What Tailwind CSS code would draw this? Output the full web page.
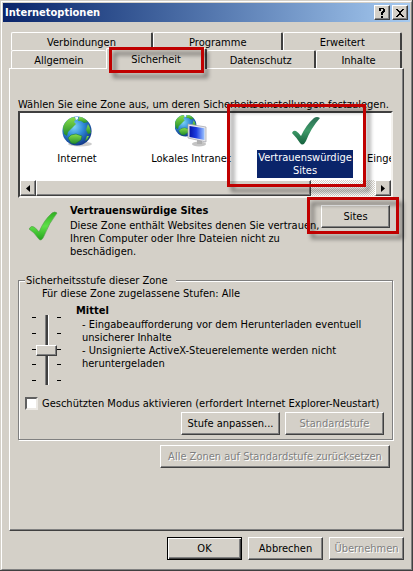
<!DOCTYPE html>
<html lang="de">
<head>
	<meta charset="UTF-8">
	<meta name="viewport" content="width=device-width, initial-scale=1.0">
	<script src="https://cdn.jsdelivr.net/npm/@tailwindcss/browser@4"></script>
	<title>Internetoptionen</title>
</head>
<body class="bg-[#d4d0c8] text-black text-[11px] leading-[13px] font-['DejaVu_Sans_Condensed','DejaVu_Sans',sans-serif]">
	<div class="min-h-screen flex flex-col pl-px pt-px bg-[#d4d0c8] border-r border-b border-[#404040]">
	<main class="grow flex flex-col p-px border border-t-white border-l-white border-r-[#808080] border-b-[#808080] overflow-hidden">

		<!-- Title bar -->
		<header class="h-[19px] flex items-center gap-0.5 px-0.5 bg-linear-to-r from-[#0a246a] to-[#a6caf0]">
			<h1 class="grow font-bold text-white">Internetoptionen</h1>
			<button aria-label="Hilfe" class="w-4 h-[15px] flex items-center justify-center bg-[#d4d0c8] border border-t-white border-l-white border-r-[#404040] border-b-[#404040] shadow-[inset_-1px_-1px_#808080]">
				<svg class="w-2 h-[10px]" viewBox="0 0 8 10" shape-rendering="crispEdges"><path d="M1 0h5v1h1v3h-1v1h-1v2h-2v-3h1v-1h1v-2h-2v2h-2zM3 8h2v2h-2z"/></svg>
			</button>
			<button aria-label="Schließen" class="w-4 h-[15px] flex items-center justify-center bg-[#d4d0c8] border border-t-white border-l-white border-r-[#404040] border-b-[#404040] shadow-[inset_-1px_-1px_#808080]">
				<svg class="w-2 h-2" viewBox="0 0 8 8" shape-rendering="crispEdges"><path d="M0 0h2v1h1v1h2v-1h1v-1h2v1h-1v1h-1v1h-1v2h1v1h1v1h1v1h-2v-1h-1v-1h-2v1h-1v1h-2v-1h1v-1h1v-1h1v-2h-1v-1h-1v-1h-1z"/></svg>
			</button>
		</header>

		<div class="grow flex flex-col px-1.5 pt-[10px] pb-2">
			<!-- Tabs -->
			<nav class="px-0.5">
				<div class="flex h-[18px]">
					<button class="flex-[142] pt-0.5 rounded-t-xs border-t border-l border-white border-r-2 border-r-[#404040]">Verbindungen</button>
					<button class="flex-[130] pt-0.5 rounded-t-xs border-t border-l border-white border-r-2 border-r-[#404040]">Programme</button>
					<button class="flex-[118] pt-0.5 rounded-t-xs border-t border-l border-white border-r-2 border-r-[#404040]">Erweitert</button>
				</div>
				<div class="flex h-[18px]">
					<button class="flex-[95] pt-0.5 rounded-t-xs border-t border-l border-white">Allgemein</button>
					<div class="flex-[103] relative z-10 -mt-0.5 -mb-px flex">
						<button class="grow bg-[#d4d0c8] rounded-t-xs border-t border-l border-white border-r-2 border-r-[#404040]">Sicherheit</button>
						<div class="absolute -top-px left-[3px] right-[3px] h-[26px] border-3 border-[#c00000] drop-shadow-[4px_5px_2px_rgba(0,0,0,0.45)]"></div>
					</div>
					<button class="flex-[108] pt-0.5 rounded-t-xs border-t border-white border-r-2 border-r-[#404040]">Datenschutz</button>
					<button class="flex-[84] pt-0.5 rounded-t-xs border-t border-l border-white border-r-2 border-r-[#404040]">Inhalte</button>
				</div>
			</nav>

			<section class="grow flex flex-col pl-2 pr-[10px] pt-[29px] border border-t-white border-l-white border-r-[#404040] border-b-[#404040] shadow-[inset_-1px_-1px_#808080]">
				<p class="whitespace-nowrap">Wählen Sie eine Zone aus, um deren Sicherheitseinstellungen festzulegen.</p>

				<!-- Zone list -->
				<div class="relative">
					<div class="h-[87px] flex flex-col bg-white border-2 border-t-[#404040] border-l-[#404040] border-r-[#f4f2ee] border-b-[#f4f2ee] overflow-hidden">
						<div class="grow flex pt-0.5 overflow-hidden">
							<button class="w-[114px] shrink-0 flex flex-col items-center gap-[5px]">
								<svg class="w-8 h-8" viewBox="0 0 32 32">
									<defs>
										<radialGradient id="sea" cx="0.4" cy="0.35" r="0.65">
											<stop offset="0" stop-color="#7fd4f8"/><stop offset="0.5" stop-color="#2f8ad8"/><stop offset="1" stop-color="#123a8c"/>
										</radialGradient>
										<linearGradient id="land" x1="0" y1="0" x2="0" y2="1">
											<stop offset="0" stop-color="#8be04a"/><stop offset="1" stop-color="#1f8a2c"/>
										</linearGradient>
									</defs>
									<ellipse cx="19" cy="29" rx="12" ry="2.5" fill="#000" opacity="0.2"/>
									<g id="globe">
										<circle cx="16" cy="16" r="14.6" fill="url(#sea)"/>
										<path d="M2 13C3 7 8 3 13 2l2 2-2 3 2 2-5 5-3 3-1 4-3-2z" fill="url(#land)"/>
										<path d="M18 2c4 0 7 2 9 5l-4 1-3-2-3 0z" fill="url(#land)"/>
										<path d="M27 9l2 4 1 5-3 1-2-4z" fill="url(#land)"/>
										<path d="M10 20l5-1 6 2-1 4-6 4-4-1-3-5z" fill="url(#land)" stroke="#136b30" stroke-width="0.5"/>
										<path d="M26 21l2 0-2 4-2 1z" fill="url(#land)"/>
										<path d="M14 2l3 0 0 2-2 1z" fill="#f4fbff"/>
									</g>
								</svg>
								<span>Internet</span>
							</button>
							<button class="w-[114px] shrink-0 flex flex-col items-center gap-[5px]">
								<svg class="w-8 h-8" viewBox="0 0 32 32">
									<use href="#globe" transform="scale(0.75) translate(-2 -2)"/>
									<defs><linearGradient id="scr" x1="0" y1="0" x2="1" y2="0"><stop offset="0" stop-color="#0514a8"/><stop offset="0.45" stop-color="#1c3ce0"/><stop offset="1" stop-color="#9cc4ff"/></linearGradient></defs>
									<ellipse cx="24" cy="29" rx="7" ry="2.5" fill="#c4c4c4"/>
									<path d="M22 24l5 1v4h-5z" fill="#b0b0b0"/>
									<path d="M13 9l18 3v15l-18-4z" fill="#e8e8ec" stroke="#a0a0a8" stroke-width="0.7"/>
									<path d="M14.5 11l15 2.3v11.6l-15-3z" fill="url(#scr)"/>
								</svg>
								<span class="whitespace-nowrap">Lokales Intranet</span>
							</button>
							<button class="w-[114px] shrink-0 flex flex-col items-center gap-[3px]">
								<svg class="w-8 h-8" viewBox="0 0 32 32">
									<defs><linearGradient id="dark" x1="0" y1="0" x2="0" y2="1"><stop offset="0" stop-color="#2b6e54"/><stop offset="0.5" stop-color="#3e9a68"/><stop offset="1" stop-color="#14603c"/></linearGradient></defs>
									<path d="M3 18Q4 15 7 16Q10 18 12 21Q17 10 25 3Q28 1 31 3Q22 13 17 26Q14 32 11 28Q7 22 3 18z" fill="url(#dark)"/>
								</svg>
								<span class="px-px pt-px pb-px bg-[#0a246a] text-white">Vertrauenswürdige<br>Sites</span>
							</button>
							<button class="w-[114px] shrink-0 flex flex-col items-center gap-[5px]">
								<span class="w-8 h-8"></span>
								<span class="whitespace-nowrap">Eingeschränkte Sites</span>
							</button>
						</div>
						<div class="h-4 shrink-0 flex bg-[repeating-conic-gradient(#d4d0c8_0_25%,#ffffff_0_50%)] bg-size-[2px_2px]">
							<button aria-label="Nach links" class="w-4 flex items-center justify-center bg-[#d4d0c8] border border-t-white border-l-white border-r-[#404040] border-b-[#404040] shadow-[inset_-1px_-1px_#808080]">
								<svg class="w-1 h-[7px]" viewBox="0 0 4 7"><path d="M4 0v7L0 3.5z"/></svg>
							</button>
							<div class="w-[74%] bg-[#d4d0c8] border border-t-white border-l-white border-r-[#404040] border-b-[#404040] shadow-[inset_-1px_-1px_#808080]"></div>
							<button aria-label="Nach rechts" class="w-4 ml-auto flex items-center justify-center bg-[#d4d0c8] border border-t-white border-l-white border-r-[#404040] border-b-[#404040] shadow-[inset_-1px_-1px_#808080]">
								<svg class="w-1 h-[7px]" viewBox="0 0 4 7"><path d="M0 0v7L4 3.5z"/></svg>
							</button>
						</div>
					</div>
					<div class="absolute -top-[7px] left-[209px] w-[139px] h-[83px] border-3 border-[#c00000] drop-shadow-[4px_5px_2px_rgba(0,0,0,0.45)]"></div>
				</div>

				<!-- Selected zone -->
				<div class="flex pt-1.5 pr-[3px]">
					<svg class="w-[30px] h-[30px] ml-[10px] mt-[7px] shrink-0" viewBox="0 0 30 30">
						<defs><linearGradient id="lime" x1="0" y1="0" x2="0" y2="1"><stop offset="0" stop-color="#2fae22"/><stop offset="0.5" stop-color="#5fe048"/><stop offset="1" stop-color="#22a41c"/></linearGradient></defs>
						<path d="M1 18Q3 14 6 16Q9 18 11 21Q16 9 24 2Q27 0 29 2Q21 12 16 25Q13 32 10 27Q6 21 1 18z" fill="url(#lime)" stroke="#4f9a44" stroke-width="0.6"/>
					</svg>
					<div class="flex-1 w-0 pl-3 whitespace-nowrap">
						<h2 class="font-bold pb-0.5">Vertrauenswürdige Sites</h2>
						<p>Diese Zone enthält Websites denen Sie vertrauen,<br>Ihren Computer oder Ihre Dateien nicht zu<br>beschädigen.</p>
					</div>
					<div class="relative self-start mt-px">
						<button class="block w-[69px] h-[23px] bg-[#d4d0c8] border border-t-white border-l-white border-r-[#404040] border-b-[#404040] shadow-[inset_-1px_-1px_#808080]">Sites</button>
						<div class="absolute -top-2 -left-[14px] -right-[9px] h-[37px] border-3 border-[#c00000] drop-shadow-[4px_5px_2px_rgba(0,0,0,0.45)]"></div>
					</div>
				</div>

				<!-- Security level -->
				<fieldset class="min-w-0 mt-4 pl-1.5 pr-2 pb-1 border border-[#808080] shadow-[1px_1px_#fff,inset_1px_1px_#fff]">
					<legend class="px-px pr-2 bg-[#d4d0c8]">Sicherheitsstufe dieser Zone</legend>
					<p class="pl-[17px]">Für diese Zone zugelassene Stufen: Alle</p>
					<div class="flex pl-[7px]">
						<div class="flex pt-[13px] h-[85px]">
							<div class="flex flex-col justify-between py-1">
								<i class="w-1 h-px bg-black"></i><i class="w-1 h-px bg-black"></i><i class="w-1 h-px bg-black"></i><i class="w-1 h-px bg-black"></i><i class="w-1 h-px bg-black"></i>
							</div>
							<input type="range" min="0" max="4" value="2" aria-label="Sicherheitsstufe" class="appearance-none [writing-mode:vertical-lr] w-[21px] h-full mx-px bg-[linear-gradient(to_right,#808080_1px,#404040_1px,#404040_3px,#fff_3px)] bg-size-[4px_70px] bg-center bg-no-repeat [&::-webkit-slider-thumb]:appearance-none [&::-webkit-slider-thumb]:w-[21px] [&::-webkit-slider-thumb]:h-[11px] [&::-webkit-slider-thumb]:bg-[#d4d0c8] [&::-webkit-slider-thumb]:border [&::-webkit-slider-thumb]:border-t-white [&::-webkit-slider-thumb]:border-l-white [&::-webkit-slider-thumb]:border-r-[#404040] [&::-webkit-slider-thumb]:border-b-[#404040] [&::-webkit-slider-thumb]:shadow-[inset_-1px_-1px_#808080]">
							<div class="flex flex-col justify-between py-1">
								<i class="w-1 h-px bg-black"></i><i class="w-1 h-px bg-black"></i><i class="w-1 h-px bg-black"></i><i class="w-1 h-px bg-black"></i><i class="w-1 h-px bg-black"></i>
							</div>
						</div>
						<div class="pl-[15px] pt-1 whitespace-nowrap">
							<h3 class="font-bold pb-px">Mittel</h3>
							<p class="pl-1.5">- Eingabeaufforderung vor dem Herunterladen eventuell<br>unsicherer Inhalte<br>- Unsignierte ActiveX-Steuerelemente werden nicht<br>heruntergeladen</p>
						</div>
					</div>
					<label class="flex items-center gap-1 mt-3 whitespace-nowrap">
						<input type="checkbox" class="appearance-none w-[13px] h-[13px] shrink-0 bg-white border-2 border-t-[#606060] border-l-[#606060] border-r-[#ece9e4] border-b-[#ece9e4]">
						Geschützten Modus aktivieren (erfordert Internet Explorer-Neustart)
					</label>
					<div class="flex justify-end gap-[5px] mt-0.5">
						<button class="w-[99px] h-[23px] whitespace-nowrap border border-t-white border-l-white border-r-[#404040] border-b-[#404040] shadow-[inset_-1px_-1px_#808080]">Stufe anpassen...</button>
						<button disabled class="w-[99px] h-[23px] text-[#808080] text-shadow-[1px_1px_0_#fff] border border-t-white border-l-white border-r-[#404040] border-b-[#404040] shadow-[inset_-1px_-1px_#808080]">Standardstufe</button>
					</div>
				</fieldset>
				<button disabled class="self-end w-[230px] h-[23px] mt-[5px] mr-[3px] whitespace-nowrap text-[#808080] text-shadow-[1px_1px_0_#fff] border border-t-white border-l-white border-r-[#404040] border-b-[#404040] shadow-[inset_-1px_-1px_#808080]">Alle Zonen auf Standardstufe zurücksetzen</button>
			</section>

			<!-- Dialog buttons -->
			<footer class="flex justify-end gap-1.5 pt-1.5">
				<button class="w-[75px] h-[23px] border border-black shadow-[inset_1px_1px_#fff,inset_-1px_-1px_#404040,inset_-2px_-2px_#808080]">OK</button>
				<button class="w-[75px] h-[23px] border border-t-white border-l-white border-r-[#404040] border-b-[#404040] shadow-[inset_-1px_-1px_#808080]">Abbrechen</button>
				<button disabled class="w-[75px] h-[23px] text-[#808080] text-shadow-[1px_1px_0_#fff] border border-t-white border-l-white border-r-[#404040] border-b-[#404040] shadow-[inset_-1px_-1px_#808080]">Übernehmen</button>
			</footer>
		</div>
	</main>
	</div>
</body>
</html>
